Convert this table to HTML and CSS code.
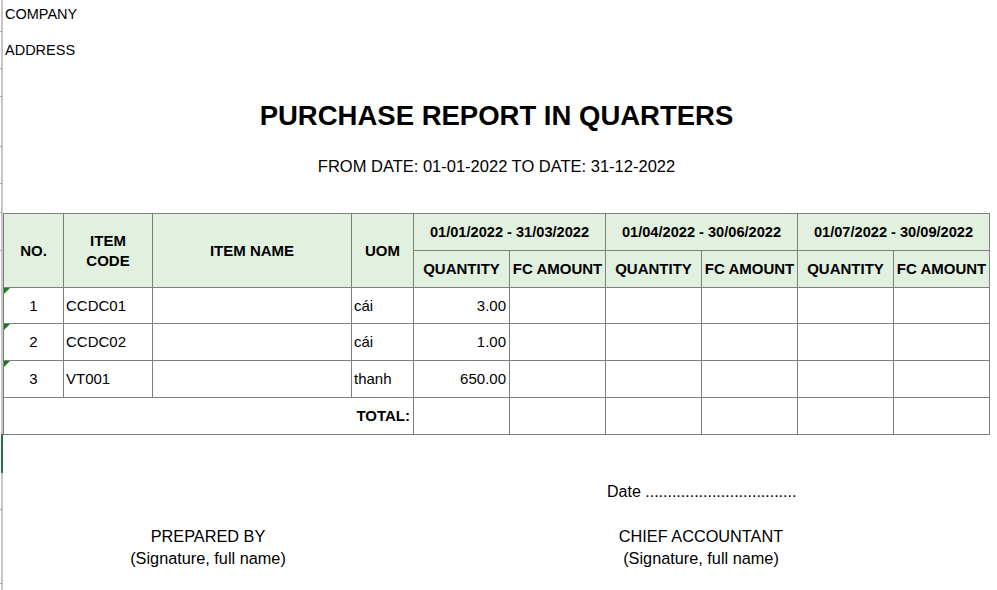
FILE: index.html
```html
<!DOCTYPE html>
<html lang="en">
<head>
<meta charset="utf-8">
<title>Purchase report in quarters</title>
<link rel="stylesheet" href="styles.css">
</head>
<body>
<div class="sheet">
  <div class="rowheads">
    <div class="rh rh-a"></div>
    <div class="rh rh-b"></div>
    <div class="rh rh-c"></div>
    <div class="rh rh-d"></div>
    <div class="rh rh-e"></div>
    <div class="rh rh-f"></div>
    <div class="rh rh-g"></div>
    <div class="rh rh-h"></div>
    <div class="rh rh-sel"></div>
    <div class="rh rh-i"></div>
    <div class="rh rh-j"></div>
    <div class="rh rh-k"></div>
  </div>
  <div class="page">
    <div class="company">COMPANY</div>
    <div class="address">ADDRESS</div>
    <div class="gap-a"></div>
    <h1 class="title">PURCHASE REPORT IN QUARTERS</h1>
    <div class="subtitle">FROM DATE: 01-01-2022 TO DATE: 31-12-2022</div>
    <div class="gap-b"></div>
    <table class="report">
      <colgroup>
        <col class="c-no"><col class="c-code"><col class="c-name"><col class="c-uom">
        <col class="c-q"><col class="c-q"><col class="c-q"><col class="c-q"><col class="c-q"><col class="c-q">
      </colgroup>
      <thead>
        <tr>
          <th rowspan="2">NO.</th>
          <th rowspan="2">ITEM<br>CODE</th>
          <th rowspan="2">ITEM NAME</th>
          <th rowspan="2">UOM</th>
          <th colspan="2" class="period">01/01/2022 - 31/03/2022</th>
          <th colspan="2" class="period">01/04/2022 - 30/06/2022</th>
          <th colspan="2" class="period">01/07/2022 - 30/09/2022</th>
        </tr>
        <tr>
          <th>QUANTITY</th><th>FC AMOUNT</th>
          <th>QUANTITY</th><th>FC AMOUNT</th>
          <th>QUANTITY</th><th>FC AMOUNT</th>
        </tr>
      </thead>
      <tbody>
        <tr class="short">
          <td class="no flag">1</td><td>CCDC01</td><td></td><td>cái</td>
          <td class="num">3.00</td><td></td><td></td><td></td><td></td><td></td>
        </tr>
        <tr>
          <td class="no flag">2</td><td>CCDC02</td><td></td><td>cái</td>
          <td class="num">1.00</td><td></td><td></td><td></td><td></td><td></td>
        </tr>
        <tr>
          <td class="no flag">3</td><td>VT001</td><td></td><td>thanh</td>
          <td class="num">650.00</td><td></td><td></td><td></td><td></td><td></td>
        </tr>
        <tr>
          <td colspan="4" class="total">TOTAL:</td>
          <td></td><td></td><td></td><td></td><td></td><td></td>
        </tr>
      </tbody>
    </table>
    <div class="footer">
      <div class="date">Date ..................................</div>
      <div class="sign sign-left">PREPARED BY<br>(Signature, full name)</div>
      <div class="sign sign-right">CHIEF ACCOUNTANT<br>(Signature, full name)</div>
    </div>
  </div>
</div>
</body>
</html>
```
FILE: styles.css
```css
html, body {
  margin: 0;
  padding: 0;
  background: #fff;
}

body {
  font-family: "Liberation Sans", Arial, sans-serif;
  color: #000;
  height: 590px;
  overflow: hidden;
}

.sheet {
  display: flex;
  align-items: flex-start;
  height: 590px;
  overflow: hidden;
}

/* spreadsheet row-header edge */
.rowheads {
  flex: none;
  width: 3px;
  display: flex;
  flex-direction: column;
}

.rh {
  box-sizing: border-box;
  width: 3px;
  border-right: 2px solid #c6c6c6;
  border-bottom: 1px solid #a6a6a6;
}

.rh-a { height: 32px; }
.rh-b { height: 37px; }
.rh-c { height: 28px; }
.rh-d { height: 50px; }
.rh-e { height: 37px; }
.rh-f { height: 29px; }
.rh-g { height: 38px; }
.rh-h { height: 183px; border-bottom: none; }
.rh-sel { height: 39px; border-right-color: #217346; border-bottom: none; }
.rh-i { height: 37px; }
.rh-j { height: 74px; }
.rh-k { height: 6px; border-bottom: none; }

.page {
  flex: none;
  width: 987px;
}

.company {
  font-size: 14.5px;
  line-height: 17px;
  height: 32px;
  box-sizing: border-box;
  padding: 6px 0 0 2px;
}

.address {
  font-size: 14.5px;
  line-height: 17px;
  height: 37px;
  box-sizing: border-box;
  padding: 10px 0 0 2px;
}

.gap-a { height: 28px; }

.title {
  margin: 0;
  height: 50px;
  box-sizing: border-box;
  padding-top: 3px;
  font-size: 27.5px;
  line-height: 31px;
  font-weight: bold;
  text-align: center;
}

.subtitle {
  height: 37px;
  box-sizing: border-box;
  padding-top: 10px;
  font-size: 16.5px;
  line-height: 18px;
  text-align: center;
}

.gap-b { height: 29px; }

/* report table */
.report {
  border-collapse: collapse;
  table-layout: fixed;
  width: 987px;
  font-size: 15px;
}

.c-no { width: 60px; }
.c-code { width: 89px; }
.c-name { width: 199px; }
.c-uom { width: 62px; }
.c-q { width: 96px; }

.report th,
.report td {
  border: 1px solid #7f7f7f;
  padding: 0 2px;
  height: 36px;
  box-sizing: border-box;
  line-height: 20px;
  vertical-align: middle;
  white-space: nowrap;
  overflow: hidden;
}

.report tr {
  height: 37px;
}

.report tr.short,
.report tr.short td {
  height: 36px;
}

.report th {
  background: #e2f0df;
  font-weight: bold;
  text-align: center;
  padding: 0;
}

.report th.period {
  font-size: 14.6px;
}

.report td {
  text-align: left;
}

.report td.no {
  text-align: center;
  position: relative;
}

.report td.flag::before {
  content: "";
  position: absolute;
  left: 0;
  top: 0;
  width: 0;
  height: 0;
  border-top: 6px solid #1a7a1a;
  border-right: 6px solid transparent;
}

.report td.num {
  text-align: right;
  padding-right: 3px;
}

.report td.total {
  text-align: right;
  font-weight: bold;
  padding-right: 3px;
}

/* footer */
.footer {
  display: grid;
  grid-template-columns: 410px 192px 192px;
  margin-top: 46px;
  font-size: 16.3px;
  line-height: 22px;
}

.date {
  grid-column: 3;
  grid-row: 1;
  padding-left: 2px;
  white-space: nowrap;
  margin-bottom: 22px;
  font-size: 16px;
}

.sign {
  grid-row: 2;
  text-align: center;
  white-space: nowrap;
}

.sign-left { grid-column: 1; }
.sign-right { grid-column: 3; }
```
